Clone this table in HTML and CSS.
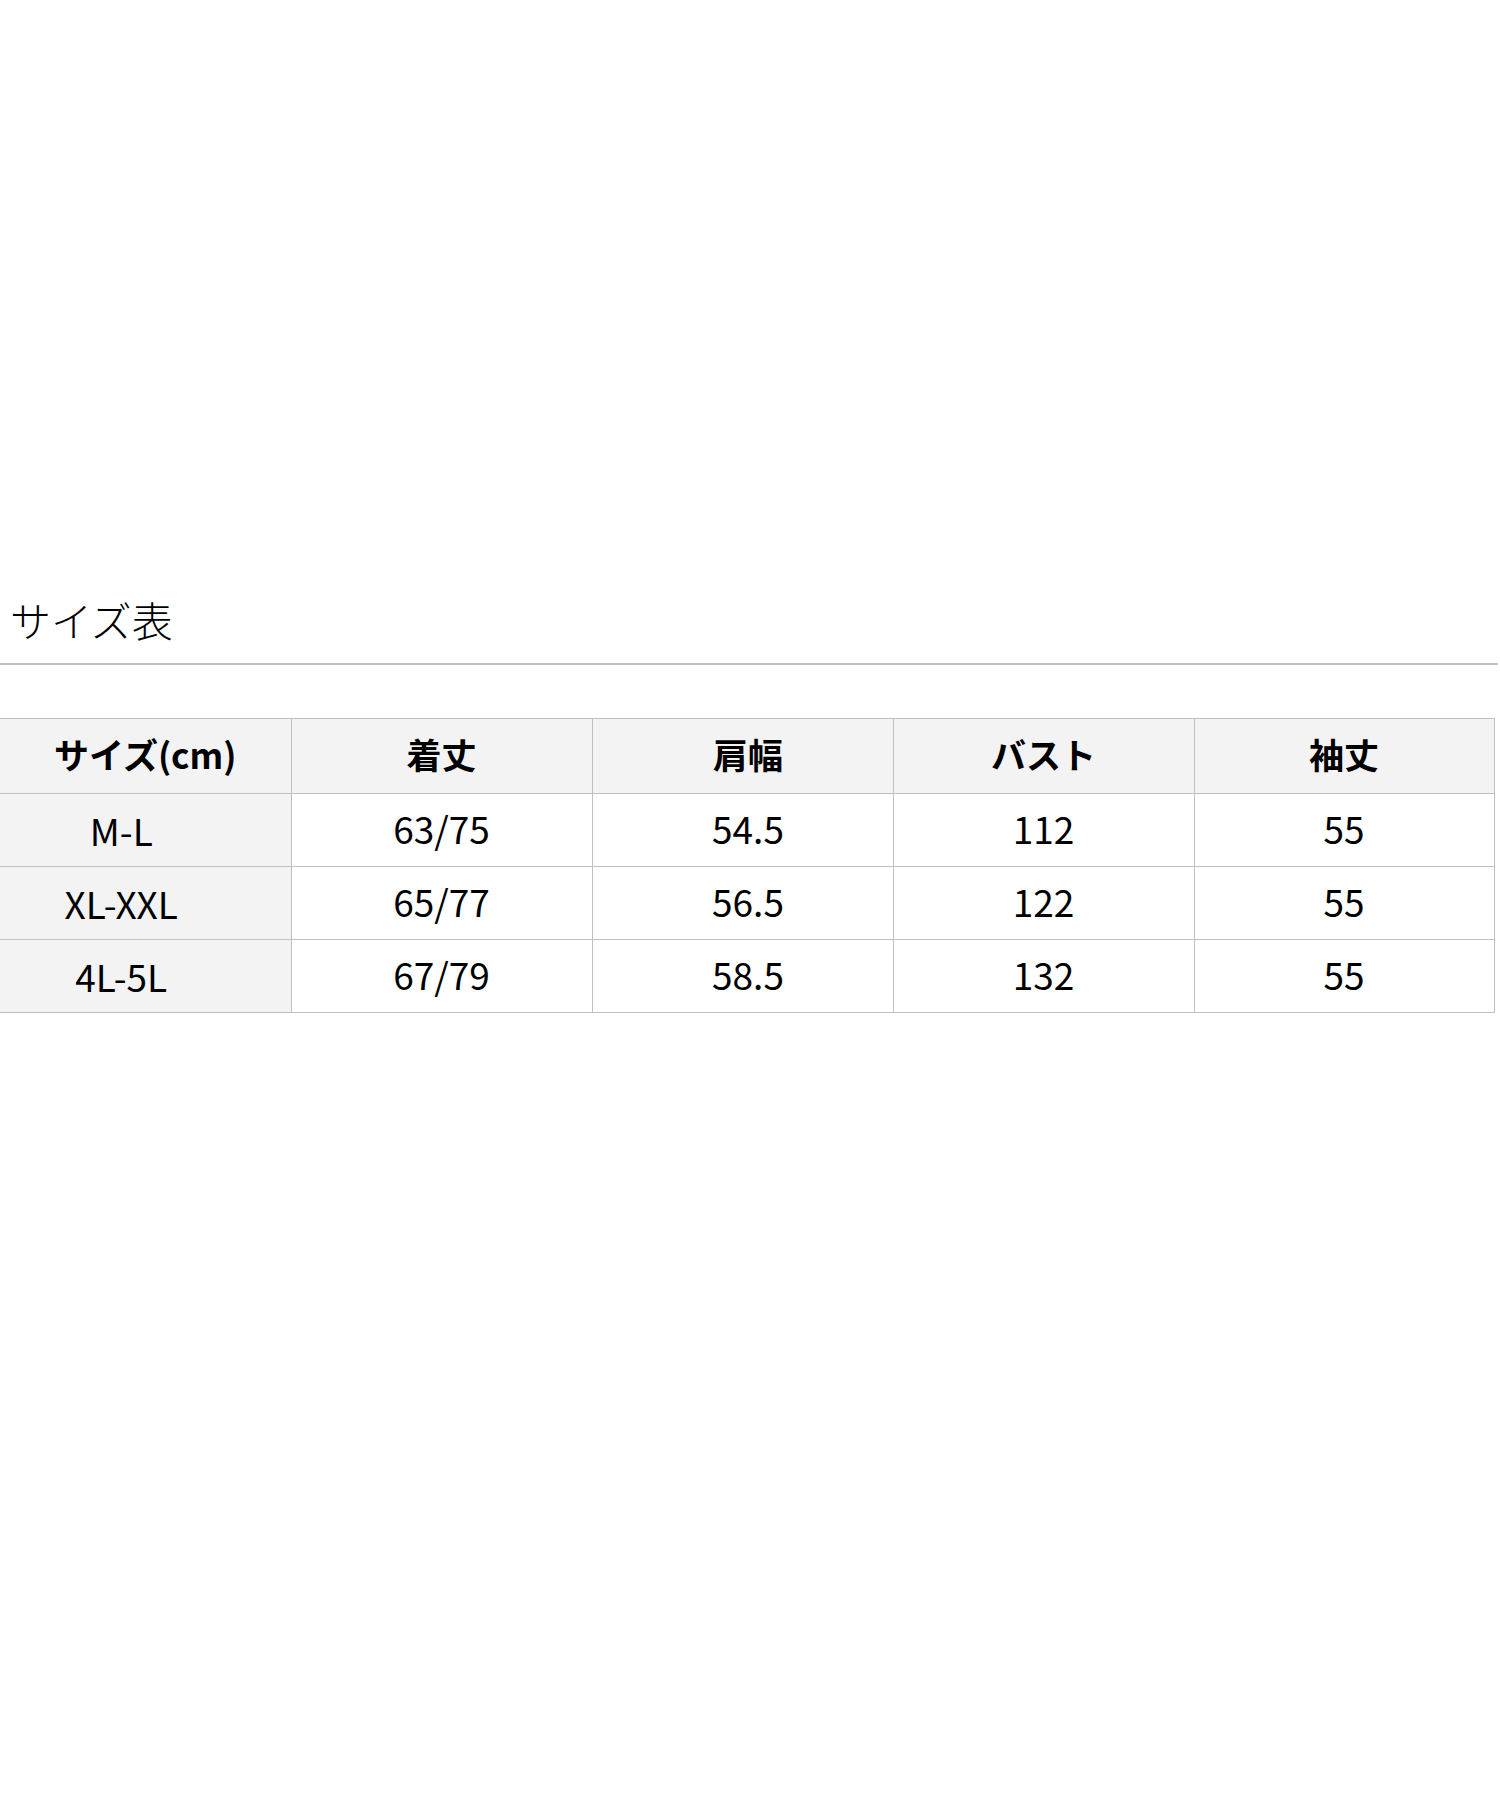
FILE: index.html
```html
<!DOCTYPE html>
<html lang="ja">
<head>
<meta charset="utf-8">
<title>サイズ表</title>
<link rel="stylesheet" href="styles.css">
</head>
<body>
<div class="page">
  <h2 class="title">サイズ表</h2>
  <table class="size-table">
    <colgroup>
      <col class="c-size">
      <col class="c-val">
      <col class="c-val">
      <col class="c-val">
      <col class="c-last">
    </colgroup>
    <thead>
      <tr>
        <th class="first">サイズ(cm)</th>
        <th>着丈</th>
        <th class="third">肩幅</th>
        <th>バスト</th>
        <th>袖丈</th>
      </tr>
    </thead>
    <tbody>
      <tr>
        <td class="first">M-L</td>
        <td>63/75</td>
        <td class="third">54.5</td>
        <td>112</td>
        <td>55</td>
      </tr>
      <tr>
        <td class="first">XL-XXL</td>
        <td>65/77</td>
        <td class="third">56.5</td>
        <td>122</td>
        <td>55</td>
      </tr>
      <tr>
        <td class="first">4L-5L</td>
        <td>67/79</td>
        <td class="third">58.5</td>
        <td>132</td>
        <td>55</td>
      </tr>
    </tbody>
  </table>
</div>
</body>
</html>
```

FILE: styles.css
```css
html, body {
  margin: 0;
  padding: 0;
  background: #ffffff;
}

body {
  font-family: "Noto Sans CJK JP", "Noto Sans", sans-serif;
  color: #000000;
}

.page {
  width: 1498px;
  padding-top: 589px;
}

.title {
  margin: 0;
  padding: 0 0 14px 10px;
  font-size: 41px;
  line-height: 60px;
  font-weight: 300;
  border-bottom: 2px solid #c0c0c0;
}

.size-table {
  margin-top: 53px;
  border-collapse: collapse;
  table-layout: fixed;
  width: 1494px;
}

.c-size { width: 291px; }
.c-val { width: 301px; }
.c-last { width: 300px; }

.size-table th,
.size-table td {
  border: 1px solid #c0c0c0;
  text-align: center;
  vertical-align: middle;
  padding: 0;
  font-size: 37px;
}

.size-table th {
  background: #f3f3f3;
  font-weight: 700;
  font-size: 35px;
  height: 69px;
  padding-bottom: 5px;
}

.size-table td {
  font-weight: 400;
  height: 67px;
  padding-bottom: 5px;
}

.size-table .first {
  border-left: none;
}

.size-table td.first {
  background: #f3f3f3;
  padding-right: 48px;
  padding-bottom: 0;
  height: 72px;
}

.size-table .third {
  padding-left: 11px;
}
```
